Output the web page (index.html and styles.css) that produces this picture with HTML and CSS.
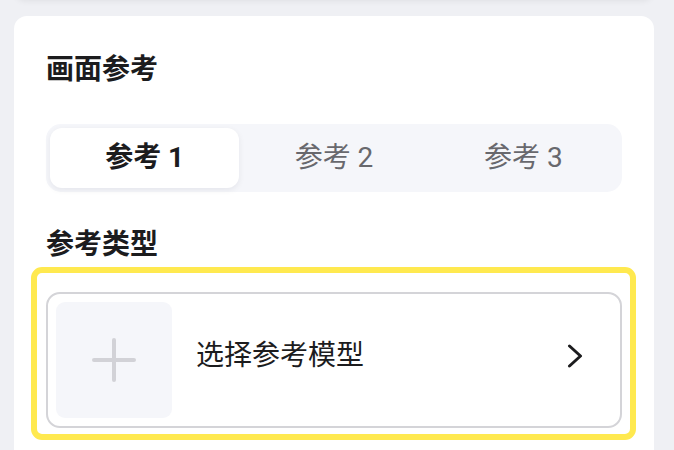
FILE: index.html
```html
<!DOCTYPE html>
<html lang="zh-CN">
<head>
<meta charset="utf-8">
<title>画面参考</title>
<link rel="stylesheet" href="styles.css">
</head>
<body>
<div class="prev-card"></div>
<main class="page">
  <section class="card">
    <h2 class="title">画面参考</h2>
    <div class="segmented">
      <div class="tab active">参考 1</div>
      <div class="tab">参考 2</div>
      <div class="tab">参考 3</div>
    </div>
    <h3 class="title section">参考类型</h3>
    <div class="picker-wrap">
      <div class="picker">
        <div class="thumb">
          <svg class="plus" width="44" height="44" viewBox="0 0 44 44">
            <path d="M22 2 V42 M2 22 H42" stroke="#d2d2d7" stroke-width="4" stroke-linecap="round" fill="none"/>
          </svg>
        </div>
        <div class="label">选择参考模型</div>
        <svg class="chevron" width="16" height="24" viewBox="0 0 16 24">
          <path d="M2.5 2 L13.5 12 L2.5 22" stroke="#1c1c1e" stroke-width="3" stroke-linecap="round" stroke-linejoin="round" fill="none"/>
        </svg>
      </div>
      <div class="highlight"></div>
    </div>
  </section>
</main>
</body>
</html>
```
FILE: styles.css
```css
html, body {
  margin: 0;
  padding: 0;
}
body {
  background: #eff0f4;
  font-family: Roboto, "Noto Sans CJK SC", sans-serif;
  color: #1c1c1e;
  height: 450px;
  overflow: hidden;
}
.prev-card {
  height: 30px;
  margin-top: -30px;
  margin-left: 14px;
  margin-right: 20px;
  background: #f7f8fa;
  border-radius: 12px;
  box-shadow: 0 1px 6px rgba(0, 0, 0, 0.07);
}
.page {
  padding: 16px 20px 0 14px;
}
.card {
  background: #ffffff;
  border-radius: 13px 13px 0 0;
  padding: 34px 32px 0 32px;
  height: 434px;
  box-sizing: border-box;
}
.title {
  margin: 0;
  font-size: 28px;
  line-height: 40px;
  font-weight: 700;
  color: #1c1c1e;
}
.segmented {
  margin-top: 34px;
  background: #f5f6fa;
  border-radius: 15px;
  padding: 4px;
  display: grid;
  grid-template-columns: 1fr 1fr 1fr;
  height: 68px;
  box-sizing: border-box;
}
.tab {
  display: flex;
  align-items: center;
  justify-content: center;
  font-size: 28px;
  line-height: 1;
  color: #68686d;
  border-radius: 12px;
}
.tab.active {
  background: #ffffff;
  color: #1c1c1e;
  font-weight: 700;
  box-shadow: 0 2px 6px rgba(20, 20, 40, 0.07);
}
.section {
  margin-top: 33px;
}
.picker-wrap {
  position: relative;
  margin-top: 27px;
}
.picker {
  display: flex;
  align-items: center;
  border: 2px solid #d4d4d8;
  border-radius: 14px;
  padding: 8px;
  height: 136px;
  box-sizing: border-box;
}
.thumb {
  width: 116px;
  height: 116px;
  background: #f5f6fa;
  border-radius: 9px;
  display: flex;
  align-items: center;
  justify-content: center;
  flex-shrink: 0;
}
.label {
  margin-left: 24px;
  font-size: 28px;
  line-height: 1;
  color: #1c1c1e;
  margin-bottom: 8px;
}
.chevron {
  margin-left: auto;
  margin-right: 29px;
  margin-bottom: 8px;
}
.highlight {
  position: absolute;
  left: -15px;
  right: -14px;
  top: -25px;
  bottom: -12px;
  border: 6px solid #ffe94f;
  border-radius: 11px;
  pointer-events: none;
}
```
